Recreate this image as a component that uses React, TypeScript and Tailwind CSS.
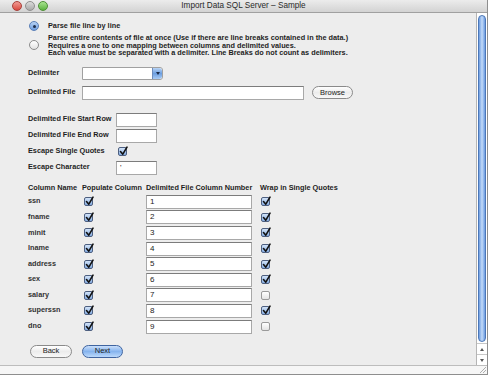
import React from 'react';

const rows = [
  { name: 'ssn', wrap: true },
  { name: 'fname', wrap: true },
  { name: 'minit', wrap: true },
  { name: 'lname', wrap: true },
  { name: 'address', wrap: true },
  { name: 'sex', wrap: true },
  { name: 'salary', wrap: false },
  { name: 'superssn', wrap: true },
  { name: 'dno', wrap: false },
];

function CheckBox({ checked = true }: { checked?: boolean }) {
  if (!checked) {
    return (
      <div className="w-[9px] h-[9px] rounded-[2px] border border-[#9a9a9a] bg-gradient-to-b from-white to-[#e4e4e4]" />
    );
  }
  return (
    <div className="relative w-[9px] h-[9px] rounded-[2px] border border-[#4d5f80] bg-gradient-to-b from-[#d2e3f8] to-[#86ade2]">
      <svg className="absolute left-[0px] top-[-2px] w-[9px] h-[10px]" viewBox="0 0 9 10">
        <path d="M1.5 5.5 L3.8 8.2 L8 1.2" fill="none" stroke="#111" strokeWidth="1.6" strokeLinecap="round" strokeLinejoin="round" />
      </svg>
    </div>
  );
}

function Radio({ selected = false }: { selected?: boolean }) {
  if (selected) {
    return (
      <div className="flex items-center justify-center w-[10px] h-[10px] rounded-full border border-[#5a7fb8] bg-gradient-to-b from-[#b7d2f3] to-[#6e9de0] shrink-0">
        <div className="w-[3px] h-[3px] rounded-full bg-[#1e2d4a]" />
      </div>
    );
  }
  return (
    <div className="w-[10px] h-[10px] rounded-full border border-[#8c8c8c] bg-gradient-to-b from-white to-[#e2e2e2] shrink-0" />
  );
}

function TextBox({ w, value = '' }: { w: string; value?: string }) {
  return (
    <div
      className={`${w} h-[14px] bg-white border border-[#a8a8a8] border-t-[#7c7c7c] flex items-center pl-[3px] text-[8px] font-normal text-[#222]`}
    >
      {value}
    </div>
  );
}

function AquaButton({ label, primary = false, w }: { label: string; primary?: boolean; w: string }) {
  return (
    <div
      className={`${w} h-[13px] rounded-full flex items-center justify-center text-[7.5px] font-normal text-[#222] border ${
        primary
          ? 'border-[#3f64a0] bg-gradient-to-b from-[#c9defa] via-[#86b4ee] to-[#bcd9fb]'
          : 'border-[#8a8a8a] bg-gradient-to-b from-white via-[#ececec] to-[#f8f8f8]'
      }`}
    >
      {label}
    </div>
  );
}

export default function App() {
  return (
    <div className="w-[500px] h-[375px] bg-white flex font-['Liberation_Sans',Arial,sans-serif] text-[#1e1e1e] overflow-hidden">
      <div className="w-[488px] h-[375px] flex flex-col border-r border-b border-[#8e8e8e] bg-[#ededed]">
        {/* title bar */}
        <div className="relative h-[13px] flex items-center justify-center bg-gradient-to-b from-[#ececec] to-[#d3d3d3] border-b border-[#a0a0a0]">
          <div className="absolute left-[12px] top-[1px] flex gap-[3px]">
            <div className="w-[10px] h-[10px] rounded-full bg-gradient-to-b from-[#f09a94] to-[#d9473f] border border-[#a8403a]" />
            <div className="w-[10px] h-[10px] rounded-full bg-gradient-to-b from-[#dcdcdc] to-[#a9a9a9] border border-[#8e8e8e]" />
            <div className="w-[10px] h-[10px] rounded-full bg-gradient-to-b from-[#a8e48f] to-[#5bb33d] border border-[#4d8f36]" />
          </div>
          <span className="text-[8.2px] text-[#2a2a2a]">Import Data SQL Server – Sample</span>
        </div>

        <div className="flex flex-1">
          {/* content */}
          <div className="flex-1 flex flex-col pt-[8px] text-[7.3px] font-bold">
            <div className="flex items-center h-[10px] pl-[29px] gap-[9px]">
              <Radio selected />
              <span>Parse file line by line</span>
            </div>
            <div className="flex items-center pl-[29px] gap-[9px] mt-[3px]">
              <Radio />
              <div className="flex flex-col leading-[7.6px]">
                <span>Parse entire contents of file at once (Use if there are line breaks contained in the data.)</span>
                <span>Requires a one to one mapping between columns and delimited values.</span>
                <span>Each value must be separated with a delimiter. Line Breaks do not count as delimiters.</span>
              </div>
            </div>

            <div className="flex items-center h-[13px] pl-[28px] mt-[10px]">
              <span className="w-[54px]">Delimiter</span>
              <div className="w-[81px] h-[13px] flex bg-white border border-[#a0a0a0] rounded-r-[3px]">
                <div className="flex-1" />
                <div className="w-[10px] h-full rounded-r-[3px] border-l border-[#6d8dbd] bg-gradient-to-b from-[#b9d4f5] via-[#6d9fe0] to-[#a8cbf5] flex items-center justify-center">
                  <div className="w-0 h-0 border-l-[2px] border-r-[2px] border-t-[3px] border-l-transparent border-r-transparent border-t-[#1b2b48]" />
                </div>
              </div>
            </div>

            <div className="flex items-center h-[14px] pl-[28px] mt-[6px]">
              <span className="w-[54px]">Delimited File</span>
              <TextBox w="w-[222px]" />
              <div className="ml-[8px]">
                <AquaButton label="Browse" w="w-[41px]" />
              </div>
            </div>

            <div className="flex flex-col gap-[2px] pl-[28px] mt-[13px]">
              <div className="flex items-center h-[14px]">
                <span className="w-[88px]">Delimited File Start Row</span>
                <TextBox w="w-[41px]" />
              </div>
              <div className="flex items-center h-[14px]">
                <span className="w-[88px]">Delimited File End Row</span>
                <TextBox w="w-[41px]" />
              </div>
              <div className="flex items-center h-[14px]">
                <span className="w-[90px]">Escape Single Quotes</span>
                <CheckBox />
              </div>
              <div className="flex items-center h-[14px]">
                <span className="w-[88px]">Escape Character</span>
                <TextBox w="w-[41px]" value="'" />
              </div>
            </div>

            {/* column table */}
            <div className="flex flex-col pl-[28px] mt-[9px]">
              <div className="flex items-center h-[10px]">
                <span className="w-[54px]">Column Name</span>
                <span className="w-[64px]">Populate Column</span>
                <span className="w-[114px]">Delimited File Column Number</span>
                <span>Wrap in Single Quotes</span>
              </div>
              <div className="flex flex-col gap-[1.6px] mt-[1px]">
                {rows.map((r, i) => (
                  <div key={r.name} className="flex items-center h-[14px]">
                    <span className="w-[54px] text-[#333]">{r.name}</span>
                    <div className="w-[64px] pl-[2px]">
                      <CheckBox />
                    </div>
                    <TextBox w="w-[106px]" value={String(i + 1)} />
                    <div className="pl-[9px]">
                      <CheckBox checked={r.wrap} />
                    </div>
                  </div>
                ))}
              </div>
            </div>

            <div className="flex items-center gap-[10px] pl-[30px] mt-[11px]">
              <AquaButton label="Back" w="w-[42px]" />
              <AquaButton label="Next" primary w="w-[41px]" />
            </div>
          </div>

          {/* vertical scrollbar */}
          <div className="w-[11px] flex flex-col bg-white border-l border-[#b5b5b5]">
            <div className="flex-1 px-[1px] pt-[2px] pb-[1px]">
              <div className="w-full h-full rounded-full border border-[#4b77b8] bg-gradient-to-r from-[#6c9be0] via-[#c4dbf8] to-[#6c9be0]" />
            </div>
            <div className="h-[11px] flex items-center justify-center border-t border-[#c8c8c8]">
              <div className="w-0 h-0 border-l-[2px] border-r-[2px] border-b-[3px] border-l-transparent border-r-transparent border-b-[#555]" />
            </div>
            <div className="h-[11px] flex items-center justify-center border-t border-[#c8c8c8]">
              <div className="w-0 h-0 border-l-[2px] border-r-[2px] border-t-[3px] border-l-transparent border-r-transparent border-t-[#555]" />
            </div>
          </div>
        </div>

        {/* bottom strip */}
        <div className="h-[9px] bg-[#f6f6f6] border-t border-[#bdbdbd] flex justify-end">
          <svg className="w-[9px] h-[8px]" viewBox="0 0 9 8">
            <path d="M8 1 L2 7 M8 4 L5 7" stroke="#9a9a9a" strokeWidth="0.8" />
          </svg>
        </div>
      </div>
    </div>
  );
}
